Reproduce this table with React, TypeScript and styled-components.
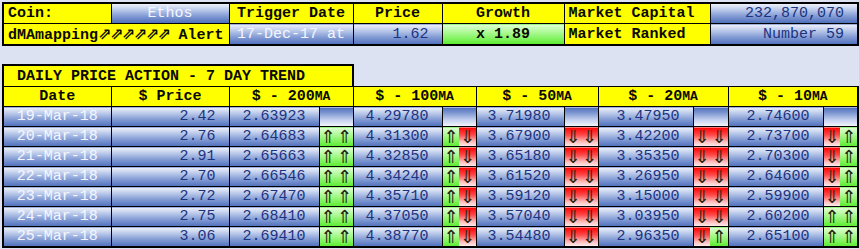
import React from 'react';
import styled, { createGlobalStyle, css } from 'styled-components';

const Global = createGlobalStyle`
  html, body { margin: 0; padding: 0; background: #dde2f2; }
  body { font-family: "Liberation Mono", "DejaVu Sans Mono", monospace; }
`;

type Tone = 'yellow' | 'blue' | 'blueInv' | 'green' | 'red';

const tones: Record<Tone, ReturnType<typeof css>> = {
  yellow: css`background: #ffff00;`,
  blue: css`background: linear-gradient(to bottom, #eef1fa 0%, #bccaea 30%, #8099d3 65%, #4f6fbb 100%);`,
  blueInv: css`background: linear-gradient(to bottom, #4f6fbb 0%, #8099d3 30%, #c4d0ee 65%, #f6f8fd 100%);`,
  green: css`background: linear-gradient(to bottom, #e2ffd8 0%, #a4f88a 45%, #5aec2e 100%);`,
  red: css`background: linear-gradient(to bottom, #ff0000 0%, #ff4a4a 40%, #ffbcbc 75%, #fff0f0 100%);`,
};

const Page = styled.div`
  padding: 2px 0 0 2px;
  display: flex;
  flex-direction: column;
  gap: 18px;
  width: 857px;
`;

const Sheet = styled.table`
  border-collapse: collapse;
  table-layout: fixed;
  width: 855px;
`;

const TopSheet = styled(Sheet)`
  border: 2px solid #000;
`;

const TrendSheet = styled(Sheet)`
  tr > td:first-child { border-left: 2px solid #000; }
  tr > td:last-child { border-right: 2px solid #000; }
  tr:first-child > td { border-top: 2px solid #000; }
  tr:last-child > td { border-bottom: 2px solid #000; }
`;

const Cell = styled.td<{ $tone: Tone; $align?: 'left' | 'center' | 'right'; $bold?: boolean; $light?: boolean; $h?: number; $indent?: number }>`
  ${(p) => tones[p.$tone]}
  height: ${(p) => p.$h ?? 19}px;
  padding: 0 ${(p) => (p.$align === 'right' ? '13px' : '4px')} 0 ${(p) => p.$indent ?? 4}px;
  border: 1px solid #000;
  font-size: 15px;
  line-height: 17px;
  white-space: nowrap;
  overflow: hidden;
  text-align: ${(p) => p.$align ?? 'left'};
  font-weight: ${(p) => (p.$bold ? 700 : 400)};
  color: ${(p) => (p.$light ? '#f4f6ff' : p.$bold ? '#0a0a00' : '#1c3380')};
  vertical-align: middle;
`;

const Arrow = styled.td<{ $tone: Tone }>`
  ${(p) => tones[p.$tone]}
  height: 19px;
  padding: 0;
  border: 1px solid #000;
  border-left: none;
  border-right: none;
  font-family: "DejaVu Sans", sans-serif;
  font-size: 18px;
  line-height: 17px;
  text-align: center;
  color: #262610;
  vertical-align: middle;
  overflow: hidden;
`;

const Ma = styled.span`
  font-size: 13px;
`;

const Rockets = styled.span`
  font-family: "DejaVu Sans", sans-serif;
  font-size: 16px;
  letter-spacing: -1.5px;
  font-weight: 700;
`;

const topCols = [108, 118, 124, 89, 122, 146, 148];
const trendCols = [108, 118, 90, 17, 17, 89, 17, 17, 88, 17, 17, 95, 17, 18, 95, 17, 18];

type Dir = 'u' | 'd' | '';
interface Row {
  date: string;
  price: string;
  ma: { v: string; a: [Dir, Dir] }[];
}

const rows: Row[] = [
  { date: '19-Mar-18', price: '2.42', ma: [
    { v: '2.63923', a: ['', ''] }, { v: '4.29780', a: ['', ''] }, { v: '3.71980', a: ['', ''] },
    { v: '3.47950', a: ['', ''] }, { v: '2.74600', a: ['', ''] }] },
  { date: '20-Mar-18', price: '2.76', ma: [
    { v: '2.64683', a: ['u', 'u'] }, { v: '4.31300', a: ['u', 'd'] }, { v: '3.67900', a: ['d', 'd'] },
    { v: '3.42200', a: ['d', 'd'] }, { v: '2.73700', a: ['d', 'u'] }] },
  { date: '21-Mar-18', price: '2.91', ma: [
    { v: '2.65663', a: ['u', 'u'] }, { v: '4.32850', a: ['u', 'd'] }, { v: '3.65180', a: ['d', 'd'] },
    { v: '3.35350', a: ['d', 'd'] }, { v: '2.70300', a: ['d', 'u'] }] },
  { date: '22-Mar-18', price: '2.70', ma: [
    { v: '2.66546', a: ['u', 'u'] }, { v: '4.34240', a: ['u', 'd'] }, { v: '3.61520', a: ['d', 'd'] },
    { v: '3.26950', a: ['d', 'd'] }, { v: '2.64600', a: ['d', 'u'] }] },
  { date: '23-Mar-18', price: '2.72', ma: [
    { v: '2.67470', a: ['u', 'u'] }, { v: '4.35710', a: ['u', 'd'] }, { v: '3.59120', a: ['d', 'd'] },
    { v: '3.15000', a: ['d', 'd'] }, { v: '2.59900', a: ['d', 'u'] }] },
  { date: '24-Mar-18', price: '2.75', ma: [
    { v: '2.68410', a: ['u', 'u'] }, { v: '4.37050', a: ['u', 'd'] }, { v: '3.57040', a: ['d', 'd'] },
    { v: '3.03950', a: ['d', 'd'] }, { v: '2.60200', a: ['u', 'u'] }] },
  { date: '25-Mar-18', price: '3.06', ma: [
    { v: '2.69410', a: ['u', 'u'] }, { v: '4.38770', a: ['u', 'd'] }, { v: '3.54480', a: ['d', 'd'] },
    { v: '2.96350', a: ['d', 'u'] }, { v: '2.65100', a: ['u', 'u'] }] },
];

const headers = ['200', '100', '50', '20', '10'];

function ArrowCell({ d }: { d: Dir }) {
  return <Arrow $tone={d === 'u' ? 'green' : 'red'}>{d === 'u' ? '⇑' : '⇓'}</Arrow>;
}

export default function App() {
  return (
    <>
      <Global />
      <Page>
        <TopSheet>
          <colgroup>
            {topCols.map((w, i) => <col key={i} style={{ width: w }} />)}
          </colgroup>
          <tbody>
            <tr>
              <Cell $tone="yellow" $bold $h={19}>Coin:</Cell>
              <Cell $tone="blue" $align="center" $light>Ethos</Cell>
              <Cell $tone="yellow" $align="center" $bold>Trigger Date</Cell>
              <Cell $tone="yellow" $align="center" $bold>Price</Cell>
              <Cell $tone="yellow" $align="center" $bold>Growth</Cell>
              <Cell $tone="yellow" $bold>Market Capital</Cell>
              <Cell $tone="blue" $align="right">232,870,070</Cell>
            </tr>
            <tr>
              <Cell $tone="yellow" $bold colSpan={2} $h={20}>dMAmapping<Rockets>⇗⇗⇗⇗⇗⇗</Rockets> Alert</Cell>
              <Cell $tone="blue" $align="center" $light>17-Dec-17 at</Cell>
              <Cell $tone="blue" $align="right">1.62</Cell>
              <Cell $tone="green" $align="center" $bold>x 1.89</Cell>
              <Cell $tone="yellow" $bold>Market Ranked</Cell>
              <Cell $tone="blue" $align="right">Number 59</Cell>
            </tr>
          </tbody>
        </TopSheet>

        <TrendSheet>
          <colgroup>
            {trendCols.map((w, i) => <col key={i} style={{ width: w }} />)}
          </colgroup>
          <tbody>
            <tr>
              <Cell $tone="yellow" $bold colSpan={5} $h={20} $indent={13}>DAILY PRICE ACTION - 7 DAY TREND</Cell>
            </tr>
            <tr>
              <Cell $tone="yellow" $bold $align="center">Date</Cell>
              <Cell $tone="yellow" $bold $align="center">$ Price</Cell>
              {headers.map((h) => (
                <Cell key={h} $tone="yellow" $bold $align="center" colSpan={3}>
                  $ - {h}<Ma>MA</Ma>
                </Cell>
              ))}
            </tr>
            {rows.map((r) => (
              <tr key={r.date}>
                <Cell $tone="blue" $align="center" $light>{r.date}</Cell>
                <Cell $tone="blue" $align="right">{r.price}</Cell>
                {r.ma.map((m, i) => (
                  <React.Fragment key={i}>
                    <Cell $tone="blue" $align="right">{m.v}</Cell>
                    {m.a[0] === '' ? (
                      <Arrow $tone="blueInv" colSpan={2} />
                    ) : (
                      <>
                        <ArrowCell d={m.a[0]} />
                        <ArrowCell d={m.a[1]} />
                      </>
                    )}
                  </React.Fragment>
                ))}
              </tr>
            ))}
          </tbody>
        </TrendSheet>
      </Page>
    </>
  );
}
